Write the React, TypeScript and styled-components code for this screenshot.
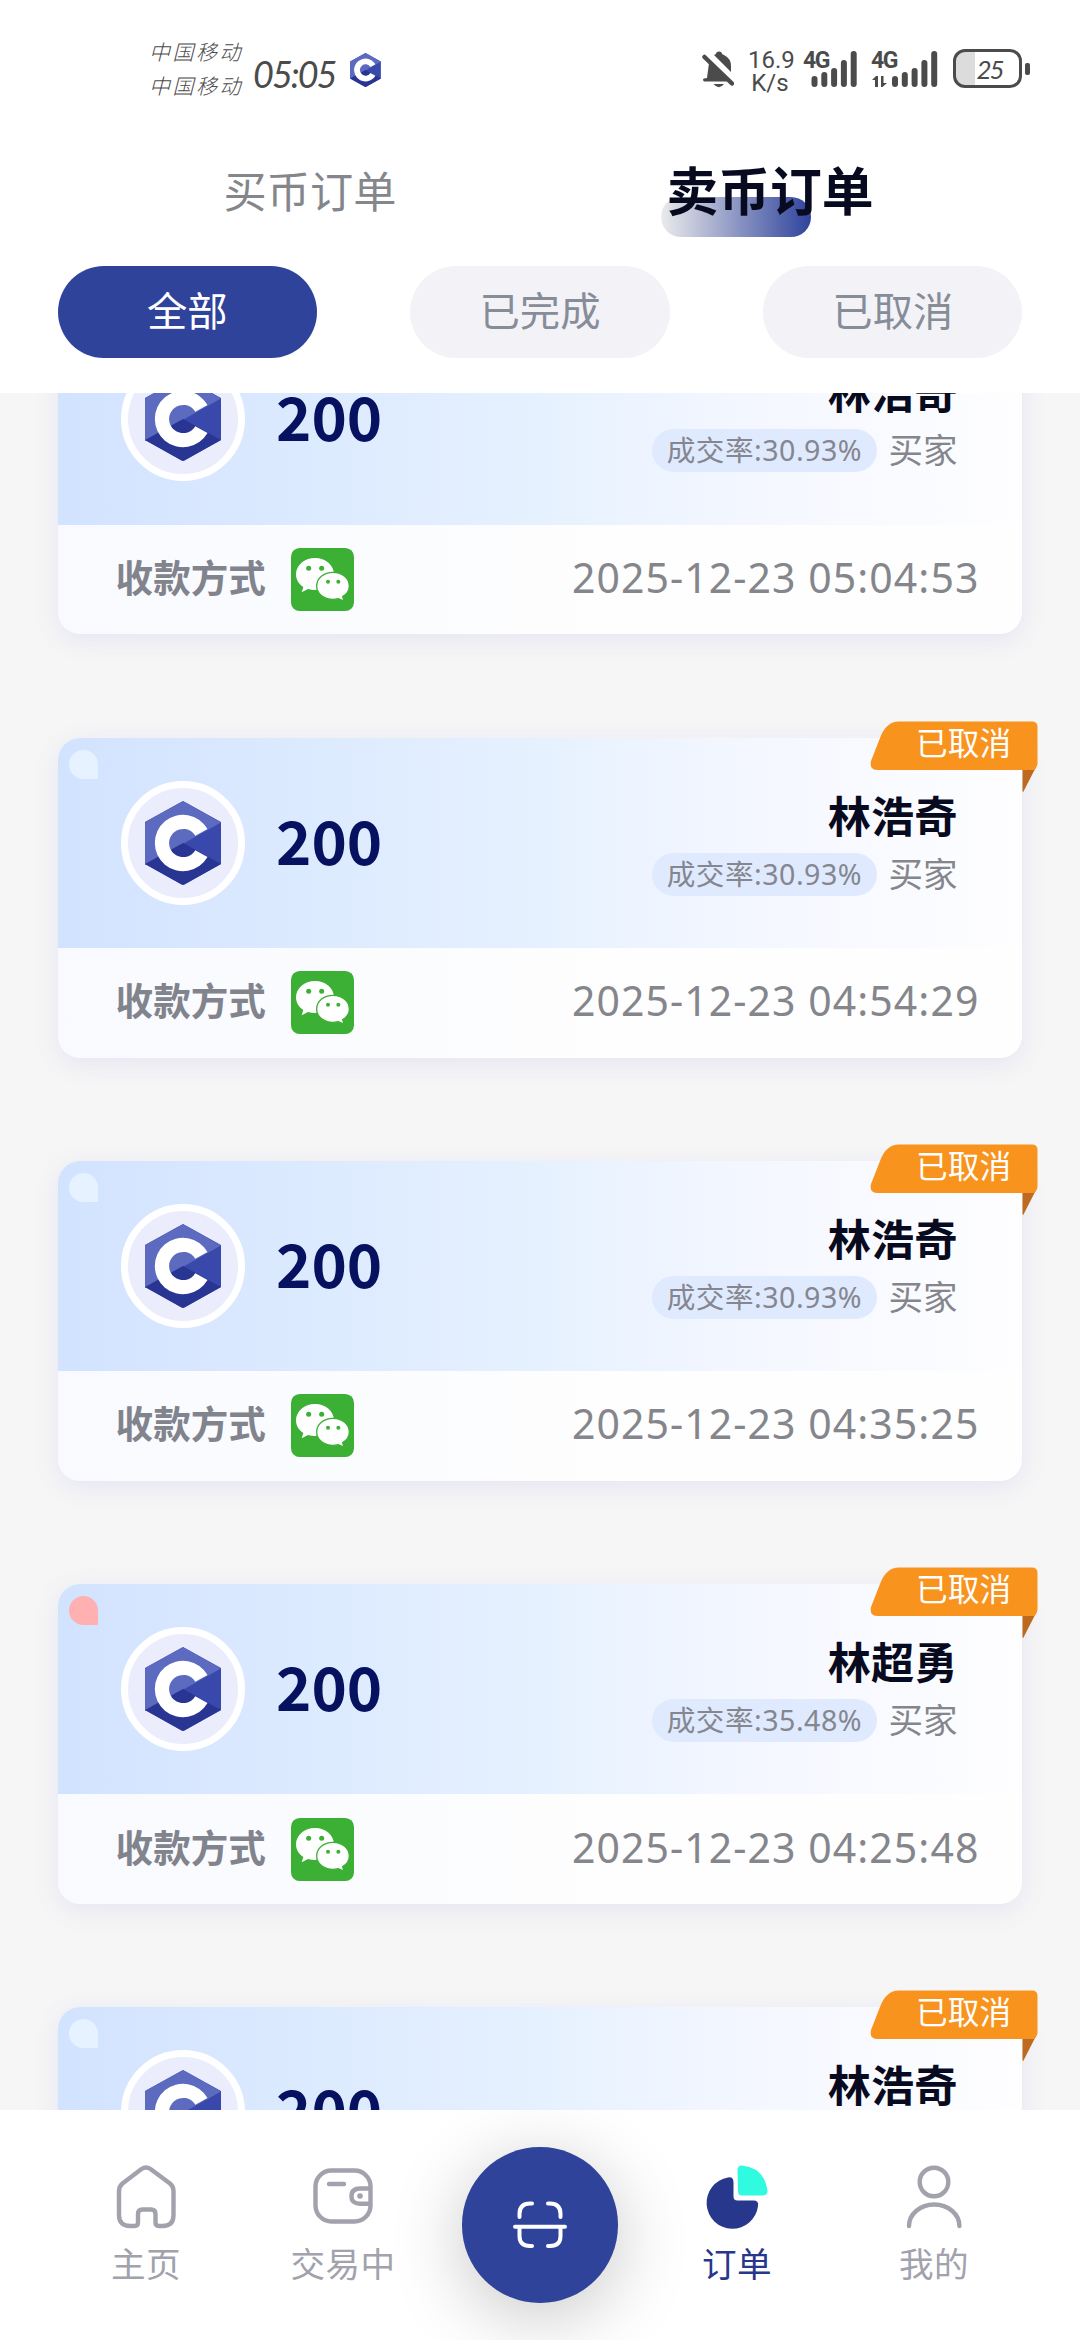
import React from "react";
import styled, { createGlobalStyle } from "styled-components";

const cjk = `"Noto Sans", "Noto Sans CJK SC", sans-serif`;

const GlobalStyle = createGlobalStyle`
  * { box-sizing: border-box; }
  body { margin: 0; background: #fff; font-family: ${cjk}; }
`;

const Screen = styled.div`
  width: 1080px;
  height: 2340px;
  display: flex;
  flex-direction: column;
  overflow: hidden;
  background: #f6f6f6;
`;

const Header = styled.header`
  flex: none;
  height: 393px;
  background: #fff;
  display: flex;
  flex-direction: column;
  position: relative;
  z-index: 1;
`;

const StatusBar = styled.div`
  height: 140px;
  padding: 34px 58px 0 149px;
  display: flex;
  justify-content: space-between;
  align-items: flex-start;
  color: #4b4b4b;
`;

const StatusLeft = styled.div`
  display: flex;
  align-items: flex-start;
`;

const Carriers = styled.div`
  width: 104px;
  font: italic 300 21px/34px "Noto Sans CJK SC", sans-serif;
  letter-spacing: 2.5px;
  white-space: nowrap;
`;

const Clock = styled.div`
  width: 97px;
  padding-top: 22px;
  font: italic 400 36px/36px Lato, sans-serif;
  letter-spacing: -2px;
`;

const StatusLogo = styled.div`
  padding-top: 19px;
  display: flex;
`;

const StatusRight = styled.div`
  display: flex;
  align-items: flex-start;
  padding-top: 13px;
`;

const BellSlot = styled.div`
  display: flex;
  padding-top: 4px;
`;

const NetSpeed = styled.div`
  width: 44px;
  margin: 2px 11px 0 14px;
  text-align: center;
  font: 400 24px/23px Roboto, sans-serif;
  white-space: nowrap;
`;

const Signal = styled.div`
  position: relative;
  width: 68px;
  height: 40px;
`;

const SignalLabel = styled.span`
  position: absolute;
  left: 0;
  top: 2px;
  font: 700 23px/23px Roboto, sans-serif;
  letter-spacing: -1.5px;
`;

const Battery = styled.div`
  position: relative;
  width: 69px;
  height: 39px;
  margin: 2px 0 0 14px;
  border: 3px solid #4b4b4b;
  border-radius: 12px;
  background: linear-gradient(90deg, #dcdcdc 19px, #fff 19px);
  padding-left: 4px;
  text-align: center;
  font: italic 400 26px/34px Lato, sans-serif;
  letter-spacing: -2px;
  &::after {
    content: "";
    position: absolute;
    right: -11px;
    top: 11px;
    width: 5px;
    height: 12px;
    border-radius: 2px;
    background: #4b4b4b;
  }
`;

const Tabs = styled.nav`
  display: flex;
  height: 126px;
  padding: 0 80px;
`;

const Tab = styled.div<{ $active?: boolean }>`
  flex: 1;
  display: flex;
  justify-content: center;
  align-items: flex-start;
  padding-top: 13px;
  line-height: 72px;
  font-family: "Noto Sans CJK SC", sans-serif;
  font-size: ${(p) => (p.$active ? 51.8 : 43.2)}px;
  font-weight: ${(p) => (p.$active ? 700 : 400)};
  color: ${(p) => (p.$active ? "#080b20" : "#85868c")};
`;

const TabLabel = styled.span<{ $active?: boolean }>`
  position: relative;
  z-index: 0;
  &::before {
    content: "";
    display: ${(p) => (p.$active ? "block" : "none")};
    position: absolute;
    z-index: -1;
    left: -5px;
    top: 44px;
    width: 150px;
    height: 40px;
    border-radius: 20px;
    background: linear-gradient(90deg, #ebebeb, #2f439c);
  }
`;

const Filters = styled.div`
  display: flex;
  justify-content: space-between;
  padding: 0 57.6px;
`;

const Filter = styled.div<{ $active?: boolean }>`
  width: 259.2px;
  height: 92px;
  border-radius: 46px;
  text-align: center;
  font: 400 40.3px/86px "Noto Sans CJK SC", sans-serif;
  background: ${(p) => (p.$active ? "#30439b" : "#f2f2f7")};
  color: ${(p) => (p.$active ? "#fff" : "#868d99")};
`;

const List = styled.main`
  flex: 1;
  min-height: 0;
  overflow: hidden;
  padding: 0 57.6px;
`;

const Feed = styled.div`
  display: flex;
  flex-direction: column;
  gap: 103.2px;
  margin-top: -78.6px;
`;

const Card = styled.article`
  position: relative;
  flex: none;
  height: 320px;
  border-radius: 22px;
  background: linear-gradient(90deg, #f8faff, #fefefe 60%);
  box-shadow: 0 6px 26px rgba(96, 88, 220, 0.11);
`;

const CardTop = styled.div`
  position: relative;
  height: 210.4px;
  padding: 0 65px 0 63.4px;
  border-radius: 22px 22px 0 0;
  background: linear-gradient(90deg, #d2e3ff 0%, #e6f1ff 50%, #f4f7ff 72%, #fefeff 100%);
  display: flex;
  align-items: flex-start;
`;

const Leaf = styled.i<{ $color: string }>`
  position: absolute;
  left: 11.5px;
  top: 12px;
  width: 29px;
  height: 29px;
  border-radius: 50% 50% 0 50%;
  background: ${(p) => p.$color};
`;

const Coin = styled.div`
  width: 124px;
  height: 124px;
  margin-top: 43px;
  border: 7px solid #fff;
  border-radius: 50%;
  background: #ebedfd;
  display: flex;
  align-items: center;
  justify-content: center;
`;

const Amount = styled.div`
  margin: 63px 0 0 31px;
  font: 700 60px/76px "Noto Sans CJK SC", sans-serif;
  color: #06115f;
`;

const Trader = styled.div`
  margin-left: auto;
  padding-top: 44px;
  display: flex;
  flex-direction: column;
  align-items: flex-end;
`;

const Name = styled.div`
  font: 700 43.2px/64px "Noto Sans CJK SC", sans-serif;
  color: #080b20;
`;

const TraderMeta = styled.div`
  display: flex;
  align-items: flex-start;
  gap: 11.5px;
  margin-top: 7px;
`;

const Rate = styled.div`
  width: 225px;
  height: 43px;
  border-radius: 22px;
  text-align: center;
  white-space: nowrap;
  background: #dfeafe;
  color: #85868f;
  font: 400 28.6px/41px ${cjk};
  letter-spacing: 0.5px;
`;

const Role = styled.div`
  color: #85868c;
  font: 400 34.5px/39px "Noto Sans CJK SC", sans-serif;
`;

const CardBottom = styled.div`
  height: 109.6px;
  padding: 0 43px 0 58px;
  display: flex;
  align-items: center;
`;

const PayLabel = styled.div`
  width: 175px;
  padding-bottom: 7px;
  font: 700 37.6px/50px "Noto Sans CJK SC", sans-serif;
  color: #81838d;
`;

const Stamp = styled.time`
  margin-left: auto;
  padding-bottom: 5px;
  font: 400 41px/60px "Noto Sans", sans-serif;
  letter-spacing: 1.05px;
  color: #85868c;
`;

const Ribbon = styled.div`
  position: absolute;
  right: -15.6px;
  top: -17px;
  width: 168px;
  height: 73px;
`;

const RibbonText = styled.span`
  position: absolute;
  left: 46px;
  top: 0;
  color: #fff;
  white-space: nowrap;
  font: 400 31.7px/40px "Noto Sans CJK SC", sans-serif;
`;

const NavBar = styled.footer`
  flex: none;
  height: 230.4px;
  padding: 0 47.6px;
  background: #fff;
  display: flex;
  position: relative;
  z-index: 1;
  overflow: hidden;
`;

const NavItem = styled.div<{ $active?: boolean }>`
  flex: 1;
  display: flex;
  flex-direction: column;
  align-items: center;
  padding-top: 52px;
  color: ${(p) => (p.$active ? "#27378c" : "#a1a2ac")};
  font: 400 34.6px/52px "Noto Sans CJK SC", sans-serif;
  letter-spacing: 0.4px;
`;

const NavLabel = styled.span`
  margin-top: 2px;
`;

const ScanButton = styled.div`
  width: 155.6px;
  height: 155.6px;
  margin: 37.4px 20.7px 0;
  border-radius: 50%;
  background: #30439b;
  box-shadow: 0 14px 72px rgba(0, 0, 0, 0.22);
  display: flex;
  align-items: center;
  justify-content: center;
`;

const CoinLogo = ({ width, height, ring = "#fff" }: { width: number; height: number; ring?: string }) => (
  <svg width={width} height={height} viewBox="0 0 76 84">
    <path d="M38 0 76 21 V63 L38 84 0 63 V21Z" fill="#3949ab" />
    <path d="M35.5 1.4Q38 0 40.500 1.400L76 21.500 0 64V22.500Q0 21 1.500 20.200Z" fill="#5c6bc0" />
    <path d="M0 63 38 42 76 63 40 83.300Q38 84.300 36 83.300Z" fill="#283593" />
    <path d="M62.500 28 A28.200 28.200 0 1 0 62.500 56 L50.300 49.200 A14.100 14.100 0 1 1 50.300 34.800Z" fill={ring} />
  </svg>
);

const WeChat = () => (
  <svg width="63" height="63" viewBox="0 0 189 189">
    <rect width="189" height="189" rx="26" fill="#3cb034" />
    <path d="M72 30C40 30 15 52 15 79c0 16 8 29 22 38l-5 16 19-10c7 2 14 3 21 3 32 0 57-20 57-47S104 30 72 30Z" fill="#fff" />
    <path d="M126 73c-28 0-49 18-49 41s21 40 49 40c6 0 11-1 16-2l17 7-4-13c12-7 20-18 20-32 0-23-21-41-49-41Z" fill="#fff" stroke="#3cb034" strokeWidth="4" />
    <circle cx="53" cy="61" r="7.500" fill="#3cb034" />
    <circle cx="92" cy="61" r="7.500" fill="#3cb034" />
    <circle cx="111" cy="101" r="6" fill="#3cb034" />
    <circle cx="142" cy="101" r="6" fill="#3cb034" />
  </svg>
);

const RibbonShape = () => (
  <svg width="168" height="73" viewBox="0 0 168 73">
    <path d="M152.500 46H166L153.500 70.500Q152.500 72 152.500 69Z" fill="#bd6a20" />
    <path d="M29 0.500H162Q167.500 0.500 167.500 6V42Q167.500 46 164 49H8Q-1 49 1 40L10 17Q16 .500 29 .500Z" fill="#f8931d" />
  </svg>
);

const BellOff = () => (
  <svg width="32" height="38" viewBox="0 0 32 38">
    <path d="M7 12 26 30.500H2Q0 28.500 2 27.500L5 27Z M12 4Q14 3.500 14.500 1.500 17 -.500 19.500 1.500 20 3.500 22 4 29 7.500 29 15V21Z M11.500 33H22Q17 39.500 11.500 33Z" fill="#4b4b4b" />
    <path d="M2.500 6 30 32.500" stroke="#4b4b4b" strokeWidth="4.500" strokeLinecap="round" />
  </svg>
);

const SignalBars = ({ data }: { data?: boolean }) => (
  <svg width="68" height="40" viewBox="0 0 68 40">
    {[11, 15, 19, 27, 36].map((h, i) => (
      <rect key={h} x={(data ? 21 : 8.5) + i * 9.8} y={40 - h} width="6" height={h} rx="3" fill="#4b4b4b" />
    ))}
    {data && <path d="M1 33 5 29H7V40H4V33Z M10 29H12.500V36H16L11.500 40H10Z" fill="#4b4b4b" />}
  </svg>
);

const line = { fill: "none", stroke: "currentColor", strokeWidth: 4.4, strokeLinecap: "round", strokeLinejoin: "round" } as const;

const HomeIcon = () => (
  <svg width="66" height="72" viewBox="0 0 66 72">
    <path {...line} d="M28.500 7Q33 4 37.500 7L57 21.500Q60.500 24.500 60.500 29V53Q60.500 64 49.500 64H46Q42.500 64 42.500 60.500V52Q42.500 47.500 38 47.500H29.500Q25 47.500 25 52V60.500Q25 64 21.500 64H17Q6 64 6 53V29Q6 24.500 9.500 21.500Z" />
  </svg>
);

const WalletIcon = () => (
  <svg width="66" height="72" viewBox="0 0 66 72">
    <rect {...line} x="5.500" y="8.500" width="55" height="51" rx="16" />
    <path {...line} strokeLinecap="butt" d="M60.500 26.500H50.500Q41.500 26.500 41.500 34.200T50.500 41.700H60.500" />
    <path {...line} d="M19 22H34" />
    <circle cx="50" cy="34" r="2.800" fill="currentColor" />
  </svg>
);

const PieIcon = () => (
  <svg width="66" height="72" viewBox="0 0 66 72">
    <path d="M29.500 20.500Q29.500 14.500 24 15.500A25.800 25.800 0 1 0 54 44Q55 38.500 49.500 38.500H33.500Q29.500 38.500 29.500 34.500Z" fill="#27378c" />
    <path d="M33.500 8Q33.500 3.500 38 3.500 60 5.500 63.500 28.500 64 33.500 59 33.500H38Q34 33.500 34 29.500Z" fill="#30fae0" />
  </svg>
);

const UserIcon = () => (
  <svg width="66" height="72" viewBox="0 0 66 72">
    <circle {...line} cx="33" cy="20" r="14.300" />
    <path {...line} d="M8 64A25.200 21.500 0 0 1 58.400 64" />
  </svg>
);

const ScanIcon = () => (
  <svg width="56" height="50" viewBox="0 0 56 50" fill="none" stroke="#fff" strokeWidth="4" strokeLinecap="round">
    <path d="M7.500 17V14Q7.500 3.500 18 3.500H20M36 3.500H38Q48.500 3.500 48.500 14V17M7.500 28V36Q7.500 46 18 46H20M36 46H38Q48.500 46 48.500 36V28M3 26.800H53" />
  </svg>
);

const orders = [
  { name: "林浩奇", rate: "30.93%", time: "2025-12-23 05:04:53", leaf: "#e6f2ff", status: "" },
  { name: "林浩奇", rate: "30.93%", time: "2025-12-23 04:54:29", leaf: "#e6f2ff", status: "已取消" },
  { name: "林浩奇", rate: "30.93%", time: "2025-12-23 04:35:25", leaf: "#e6f2ff", status: "已取消" },
  { name: "林超勇", rate: "35.48%", time: "2025-12-23 04:25:48", leaf: "#ffb0b0", status: "已取消" },
  { name: "林浩奇", rate: "", time: "", leaf: "#e6f2ff", status: "已取消" },
];

export default function App() {
  return (
    <>
      <GlobalStyle />
      <Screen>
        <Header>
          <StatusBar>
            <StatusLeft>
              <Carriers>
                <div>中国移动</div>
                <div>中国移动</div>
              </Carriers>
              <Clock>05:05</Clock>
              <StatusLogo>
                <CoinLogo width={31} height={34} />
              </StatusLogo>
            </StatusLeft>
            <StatusRight>
              <BellSlot><BellOff /></BellSlot>
              <NetSpeed>
                <div>16.9</div>
                <div>K/s</div>
              </NetSpeed>
              <Signal>
                <SignalBars />
                <SignalLabel>4G</SignalLabel>
              </Signal>
              <Signal>
                <SignalBars data />
                <SignalLabel>4G</SignalLabel>
              </Signal>
              <Battery>25</Battery>
            </StatusRight>
          </StatusBar>
          <Tabs>
            <Tab><TabLabel>买币订单</TabLabel></Tab>
            <Tab $active><TabLabel $active>卖币订单</TabLabel></Tab>
          </Tabs>
          <Filters>
            <Filter $active>全部</Filter>
            <Filter>已完成</Filter>
            <Filter>已取消</Filter>
          </Filters>
        </Header>
        <List>
          <Feed>
            {orders.map((o, i) => (
              <Card key={i}>
                <CardTop>
                  <Leaf $color={o.leaf} />
                  <Coin><CoinLogo width={76} height={84} /></Coin>
                  <Amount>200</Amount>
                  <Trader>
                    <Name>{o.name}</Name>
                    {o.rate && (
                      <TraderMeta>
                        <Rate>成交率:{o.rate}</Rate>
                        <Role>买家</Role>
                      </TraderMeta>
                    )}
                  </Trader>
                </CardTop>
                {o.time && (
                  <CardBottom>
                    <PayLabel>收款方式</PayLabel>
                    <WeChat />
                    <Stamp>{o.time}</Stamp>
                  </CardBottom>
                )}
                {o.status && (
                  <Ribbon>
                    <RibbonShape />
                    <RibbonText>{o.status}</RibbonText>
                  </Ribbon>
                )}
              </Card>
            ))}
          </Feed>
        </List>
        <NavBar>
          <NavItem><HomeIcon /><NavLabel>主页</NavLabel></NavItem>
          <NavItem><WalletIcon /><NavLabel>交易中</NavLabel></NavItem>
          <ScanButton><ScanIcon /></ScanButton>
          <NavItem $active><PieIcon /><NavLabel>订单</NavLabel></NavItem>
          <NavItem><UserIcon /><NavLabel>我的</NavLabel></NavItem>
        </NavBar>
      </Screen>
    </>
  );
}
